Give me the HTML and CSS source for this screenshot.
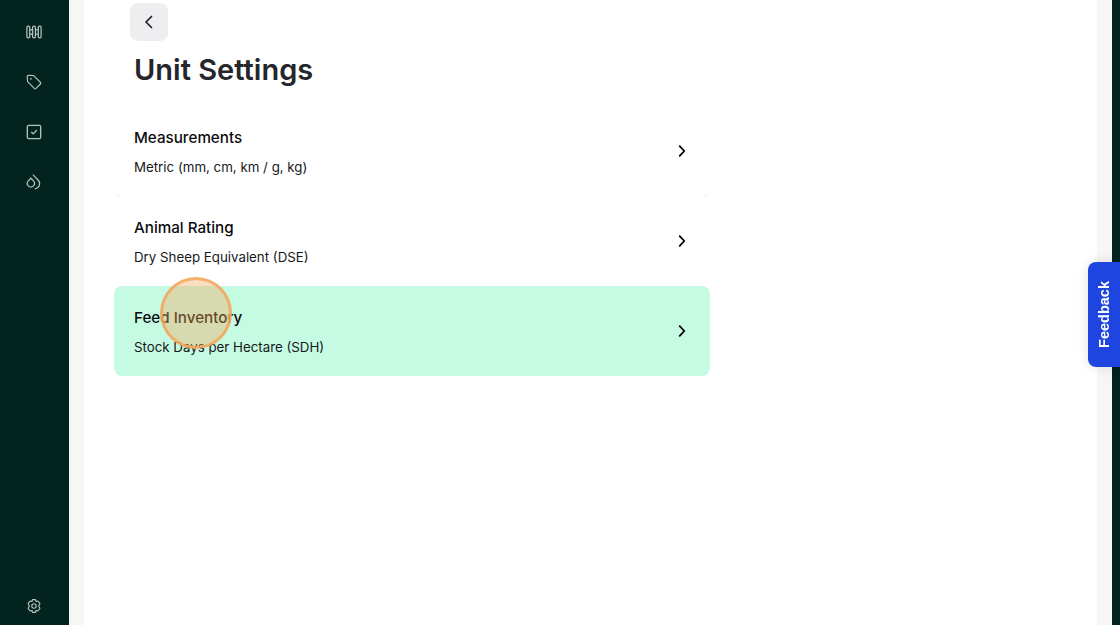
FILE: index.html
```html
<!DOCTYPE html>
<html lang="en" dir="ltr">
<head>
    <meta charset="utf-8">
    <title>Unit Settings</title>
    <link rel="stylesheet" href="styles.css">
</head>

<body>

    <nav class="sidebar">
        <div class="nav-top">
            <a class="nav-icon">
                <svg width="18" height="18" viewBox="0 0 18 18" fill="none" stroke="currentColor" stroke-width="1.4" stroke-linejoin="round">
                    <rect x="1" y="2.5" width="3.2" height="13" rx="1.4"/>
                    <rect x="7.4" y="2.5" width="3.2" height="13" rx="1.4"/>
                    <rect x="13.8" y="2.5" width="3.2" height="13" rx="1.4"/>
                    <path d="M4.2 6.5 H7.4 M10.6 6.5 H13.8 M4.2 11.5 H7.4 M10.6 11.5 H13.8"/>
                </svg>
            </a>
            <a class="nav-icon">
                <svg width="18" height="18" viewBox="0 0 18 18" fill="none" stroke="currentColor" stroke-width="1.3" stroke-linejoin="round">
                    <path d="M1.4 2.6 Q1.4 1.4 2.6 1.4 L8.6 1.8 L16.4 9.6 Q17 10.3 16.4 11 L11 16.4 Q10.3 17 9.6 16.4 L1.8 8.6 Z"/>
                    <circle cx="5.4" cy="5.4" r="1" fill="currentColor" stroke="none"/>
                </svg>
            </a>
            <a class="nav-icon">
                <svg width="18" height="18" viewBox="0 0 18 18" fill="none" stroke="currentColor" stroke-width="1.5" stroke-linejoin="round" stroke-linecap="round">
                    <rect x="1.5" y="1.5" width="15" height="15" rx="1.5"/>
                    <path d="M6.2 9.4 L8.1 11.1 L11.8 7.4"/>
                </svg>
            </a>
            <a class="nav-icon">
                <svg width="18" height="18" viewBox="0 0 18 18" fill="none" stroke="currentColor" stroke-width="1.4" stroke-linejoin="round" stroke-linecap="round">
                    <path d="M5.5 4.8 L8.4 7.8 A4 4 0 1 1 2.6 7.8 Z"/>
                    <path d="M8.2 1.2 L13.8 7 A5.8 5.8 0 0 1 10.4 16.6"/>
                </svg>
            </a>
        </div>
        <a class="nav-icon">
            <svg width="18" height="18" viewBox="0 0 18 18" fill="none" stroke="currentColor" stroke-width="1.3" stroke-linejoin="round">
                <path d="M7.3 1.8 H10.7 L11.3 4 L13.4 3.4 L15.6 6.4 L14.2 8.9 L15.6 11.6 L13.4 14.6 L11.3 14 L10.7 16.2 H7.3 L6.7 14 L4.6 14.6 L2.4 11.6 L3.8 8.9 L2.4 6.4 L4.6 3.4 L6.7 4 Z"/>
                <circle cx="9" cy="9" r="2.5"/>
            </svg>
        </a>
    </nav>

    <div class="gutter">
        <main class="panel">
            <div class="content">
                <button class="back-btn">
                    <svg width="16" height="16" viewBox="0 0 16 16" fill="none" stroke="#1f2024" stroke-width="1.7" stroke-linecap="round" stroke-linejoin="round">
                        <path d="M10.5 2.5 L5 8 L10.5 13.5"/>
                    </svg>
                </button>
                <h1 class="page-title">Unit Settings</h1>

                <div class="unit-list">
                    <a class="unit-row unit-row-first">
                        <div class="unit-text">
                            <span class="unit-name">Measurements</span>
                            <span class="unit-value">Metric (mm, cm, km / g, kg)</span>
                        </div>
                        <svg class="chevron" width="14" height="14" viewBox="0 0 14 14" fill="none" stroke="#000" stroke-width="1.8" stroke-linecap="round" stroke-linejoin="round">
                            <path d="M4.7 2.2 L9.3 7 L4.7 11.8"/>
                        </svg>
                    </a>
                    <a class="unit-row">
                        <div class="unit-text">
                            <span class="unit-name">Animal Rating</span>
                            <span class="unit-value">Dry Sheep Equivalent (DSE)</span>
                        </div>
                        <svg class="chevron" width="14" height="14" viewBox="0 0 14 14" fill="none" stroke="#000" stroke-width="1.8" stroke-linecap="round" stroke-linejoin="round">
                            <path d="M4.7 2.2 L9.3 7 L4.7 11.8"/>
                        </svg>
                    </a>
                    <a class="unit-row unit-row-active">
                        <div class="unit-text">
                            <span class="unit-name">Feed Inventory</span>
                            <span class="unit-value">Stock Days per Hectare (SDH)</span>
                        </div>
                        <svg class="chevron" width="14" height="14" viewBox="0 0 14 14" fill="none" stroke="#000" stroke-width="1.8" stroke-linecap="round" stroke-linejoin="round">
                            <path d="M4.7 2.2 L9.3 7 L4.7 11.8"/>
                        </svg>
                        <span class="click-marker"></span>
                    </a>
                </div>
            </div>
        </main>
    </div>

    <div class="end-strip"></div>

    <button class="feedback-tab"><span>Feedback</span></button>

</body>
</html>
```

FILE: styles.css
```css
* {
    box-sizing: border-box;
}

body {
    margin: 0;
    padding: 0;
    height: 625px;
    display: flex;
    overflow: hidden;
    font-family: "Inter", "Liberation Sans", sans-serif;
    background-color: #fff;
}

.sidebar {
    width: 69px;
    flex-shrink: 0;
    background-color: #03231e;
    display: flex;
    flex-direction: column;
    justify-content: space-between;
    align-items: center;
    padding: 7px 1px 4px 0;
}

.nav-top {
    display: flex;
    flex-direction: column;
}

.nav-icon {
    width: 50px;
    height: 50px;
    display: flex;
    justify-content: center;
    align-items: center;
    color: #b4c2bd;
}

.nav-icon svg {
    width: 16px;
    height: 16px;
}

.sidebar > .nav-icon {
    height: 30px;
}

.gutter {
    flex: 1;
    padding: 0 15px;
    background-color: #f6f6f7;
}

.panel {
    height: 100%;
    background-color: #fff;
}

.content {
    width: 596px;
    margin-left: 30px;
    padding-top: 3px;
}

.back-btn {
    width: 38px;
    height: 38px;
    margin-left: 16px;
    padding: 0;
    display: flex;
    justify-content: center;
    align-items: center;
    background-color: #eeeef1;
    border: none;
    border-radius: 8px;
}

.page-title {
    margin: 8px 0 0 20px;
    height: 42px;
    font-size: 29px;
    line-height: 42px;
    font-weight: 600;
    color: #25262b;
}

.unit-list {
    margin-top: 15px;
    display: flex;
    flex-direction: column;
}

.unit-row {
    position: relative;
    height: 90px;
    padding: 0 21px 0 20px;
    display: flex;
    justify-content: space-between;
    align-items: center;
    border-radius: 8px;
    background-color: #fff;
}

.unit-row-first {
    box-shadow: 0 2px 2px -1px rgba(0, 0, 0, 0.1);
}

.unit-row-active {
    background-color: #c5fbe2;
}

.unit-text {
    display: flex;
    flex-direction: column;
    gap: 9px;
    padding-top: 2px;
}

.unit-name {
    font-size: 15.2px;
    line-height: 20px;
    font-weight: 500;
    color: #0b0c0e;
}

.unit-value {
    font-size: 13.3px;
    line-height: 20px;
    color: #17181b;
}

.click-marker {
    position: absolute;
    left: 46px;
    top: -9px;
    width: 72px;
    height: 72px;
    border-radius: 50%;
    background-color: rgba(245, 166, 90, 0.38);
    border: 3px solid rgba(243, 166, 92, 0.85);
}

.end-strip {
    width: 8px;
    flex-shrink: 0;
    background-color: #03231e;
}

.feedback-tab {
    position: fixed;
    right: 0;
    top: 262px;
    width: 32px;
    height: 105px;
    padding: 0;
    display: flex;
    justify-content: center;
    align-items: center;
    background-color: #1f45e0;
    border: none;
    border-radius: 8px 0 0 8px;
    box-shadow: 0 0 12px rgba(0, 0, 0, 0.12);
    color: #fff;
    font-family: "Liberation Sans", sans-serif;
    font-size: 14.5px;
    font-weight: 700;
}

.feedback-tab span {
    writing-mode: vertical-rl;
    transform: rotate(180deg);
}
```
